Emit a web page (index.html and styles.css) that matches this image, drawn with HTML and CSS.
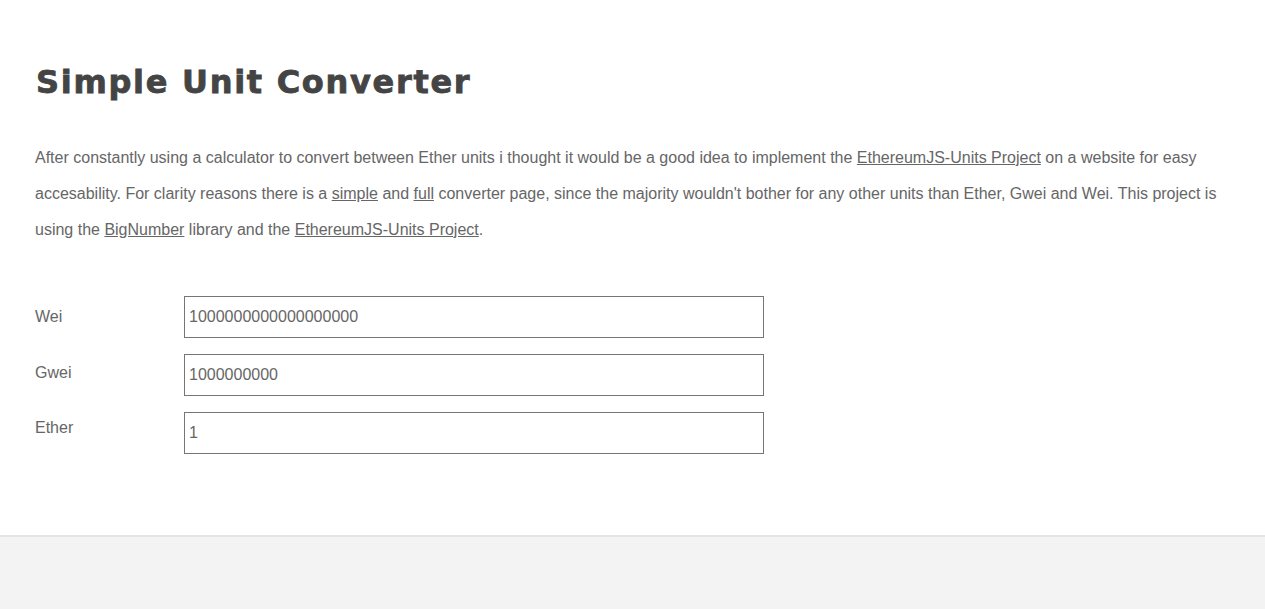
FILE: index.html
```html
<!DOCTYPE html>
<html lang="en">
<head>
<meta charset="utf-8">
<title>Simple Unit Converter</title>
<link rel="stylesheet" href="styles.css">
</head>
<body>
<main class="main">
  <h1 class="title">Simple Unit Converter</h1>
  <p class="intro">After constantly using a calculator to convert between Ether units i thought it would be a good idea to implement the <a href="#" class="link">EthereumJS-Units Project</a> on a website for easy accesability. For clarity reasons there is a <a href="#" class="link">simple</a> and <a href="#" class="link">full</a> converter page, since the majority wouldn't bother for any other units than Ether, Gwei and Wei. This project is using the <a href="#" class="link">BigNumber</a> library and the <a href="#" class="link">EthereumJS-Units Project</a>.</p>
  <form class="converter">
    <div class="row">
      <label class="label label-wei" for="wei">Wei</label>
      <input class="field" id="wei" type="text" value="1000000000000000000">
    </div>
    <div class="row">
      <label class="label label-gwei" for="gwei">Gwei</label>
      <input class="field" id="gwei" type="text" value="1000000000">
    </div>
    <div class="row">
      <label class="label label-ether" for="ether">Ether</label>
      <input class="field" id="ether" type="text" value="1">
    </div>
  </form>
</main>
<footer class="footer"></footer>
</body>
</html>
```
FILE: styles.css
```css
html, body {
  margin: 0;
  padding: 0;
  height: 100%;
}
body {
  font-family: "Liberation Sans", Arial, sans-serif;
  color: #666;
  background: #f3f3f3;
  display: flex;
  flex-direction: column;
}
.main {
  background: #fff;
  padding: 60px 35px 81px 35px;
}
.title {
  margin: 0;
  font-family: "DejaVu Sans", "Liberation Sans", sans-serif;
  font-size: 32px;
  line-height: 44px;
  font-weight: 700;
  color: #444;
  -webkit-text-stroke: 0.8px #444;
  letter-spacing: 1.7px;
  padding-left: 1px;
}
.intro {
  margin: 36px 0 48px 0;
  font-size: 16px;
  line-height: 36px;
  color: #666;
}
.link {
  color: #666;
  text-decoration: underline;
}
.converter {
  display: flex;
  flex-direction: column;
  gap: 16px;
}
.row {
  display: flex;
  align-items: flex-start;
}
.label {
  width: 149px;
  font-size: 16px;
  line-height: 18px;
  color: #666;
}
.label-wei { padding-top: 12px; }
.label-gwei { padding-top: 10px; }
.label-ether { padding-top: 7px; }
.field {
  box-sizing: border-box;
  width: 580px;
  height: 42px;
  margin: 0;
  padding: 0 4px;
  border: 1px solid #767676;
  border-radius: 0;
  font-family: "Liberation Sans", Arial, sans-serif;
  font-size: 16px;
  color: #666;
  background: #fff;
  outline: none;
}
.footer {
  flex: 1;
  border-top: 2px solid #e4e4e4;
  background: #f3f3f3;
}
```
